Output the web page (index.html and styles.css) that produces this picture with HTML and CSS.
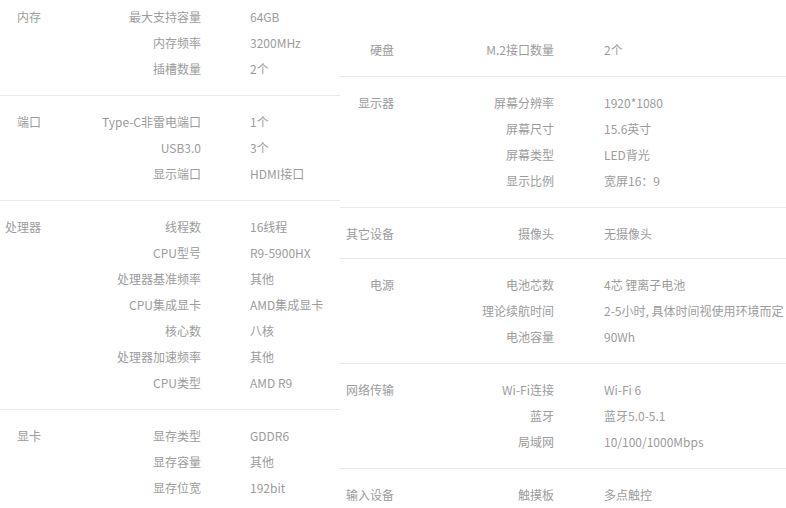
FILE: index.html
```html
<!DOCTYPE html>
<html lang="zh-CN">
<head>
<meta charset="utf-8">
<title>参数</title>
<link rel="stylesheet" href="styles.css">
</head>
<body>
<div class="sheet">
  <section class="col col-left">
    <div class="group">
      <div class="group-name">内存</div>
      <ul class="specs">
        <li class="spec"><span class="spec-key">最大支持容量</span><span class="spec-val">64GB</span></li>
        <li class="spec"><span class="spec-key">内存频率</span><span class="spec-val">3200MHz</span></li>
        <li class="spec"><span class="spec-key">插槽数量</span><span class="spec-val">2个</span></li>
      </ul>
    </div>
    <div class="group">
      <div class="group-name">端口</div>
      <ul class="specs">
        <li class="spec"><span class="spec-key">Type-C非雷电端口</span><span class="spec-val">1个</span></li>
        <li class="spec"><span class="spec-key">USB3.0</span><span class="spec-val">3个</span></li>
        <li class="spec"><span class="spec-key">显示端口</span><span class="spec-val">HDMI接口</span></li>
      </ul>
    </div>
    <div class="group">
      <div class="group-name">处理器</div>
      <ul class="specs">
        <li class="spec"><span class="spec-key">线程数</span><span class="spec-val">16线程</span></li>
        <li class="spec"><span class="spec-key">CPU型号</span><span class="spec-val">R9-5900HX</span></li>
        <li class="spec"><span class="spec-key">处理器基准频率</span><span class="spec-val">其他</span></li>
        <li class="spec"><span class="spec-key">CPU集成显卡</span><span class="spec-val">AMD集成显卡</span></li>
        <li class="spec"><span class="spec-key">核心数</span><span class="spec-val">八核</span></li>
        <li class="spec"><span class="spec-key">处理器加速频率</span><span class="spec-val">其他</span></li>
        <li class="spec"><span class="spec-key">CPU类型</span><span class="spec-val">AMD R9</span></li>
      </ul>
    </div>
    <div class="group">
      <div class="group-name">显卡</div>
      <ul class="specs">
        <li class="spec"><span class="spec-key">显存类型</span><span class="spec-val">GDDR6</span></li>
        <li class="spec"><span class="spec-key">显存容量</span><span class="spec-val">其他</span></li>
        <li class="spec"><span class="spec-key">显存位宽</span><span class="spec-val">192bit</span></li>
      </ul>
    </div>
  </section>
  <section class="col col-right">
    <div class="group">
      <div class="group-name">硬盘</div>
      <ul class="specs">
        <li class="spec"><span class="spec-key">M.2接口数量</span><span class="spec-val">2个</span></li>
      </ul>
    </div>
    <div class="group">
      <div class="group-name">显示器</div>
      <ul class="specs">
        <li class="spec"><span class="spec-key">屏幕分辨率</span><span class="spec-val">1920*1080</span></li>
        <li class="spec"><span class="spec-key">屏幕尺寸</span><span class="spec-val">15.6英寸</span></li>
        <li class="spec"><span class="spec-key">屏幕类型</span><span class="spec-val">LED背光</span></li>
        <li class="spec"><span class="spec-key">显示比例</span><span class="spec-val">宽屏16：9</span></li>
      </ul>
    </div>
    <div class="group group-short">
      <div class="group-name">其它设备</div>
      <ul class="specs">
        <li class="spec"><span class="spec-key">摄像头</span><span class="spec-val">无摄像头</span></li>
      </ul>
    </div>
    <div class="group">
      <div class="group-name">电源</div>
      <ul class="specs">
        <li class="spec"><span class="spec-key">电池芯数</span><span class="spec-val">4芯 锂离子电池</span></li>
        <li class="spec"><span class="spec-key">理论续航时间</span><span class="spec-val">2-5小时, 具体时间视使用环境而定</span></li>
        <li class="spec"><span class="spec-key">电池容量</span><span class="spec-val">90Wh</span></li>
      </ul>
    </div>
    <div class="group">
      <div class="group-name">网络传输</div>
      <ul class="specs">
        <li class="spec"><span class="spec-key">Wi-Fi连接</span><span class="spec-val">Wi-Fi 6</span></li>
        <li class="spec"><span class="spec-key">蓝牙</span><span class="spec-val">蓝牙5.0-5.1</span></li>
        <li class="spec"><span class="spec-key">局域网</span><span class="spec-val">10/100/1000Mbps</span></li>
      </ul>
    </div>
    <div class="group">
      <div class="group-name">输入设备</div>
      <ul class="specs">
        <li class="spec"><span class="spec-key">触摸板</span><span class="spec-val">多点触控</span></li>
      </ul>
    </div>
  </section>
</div>
</body>
</html>
```

FILE: styles.css
```css
html, body {
  margin: 0;
  padding: 0;
  background: #fff;
  overflow: hidden;
}

body {
  font-family: "Noto Sans CJK SC", "Noto Sans", sans-serif;
  font-size: 12px;
  line-height: 26px;
  color: #9c9c9c;
}

.sheet {
  display: flex;
  align-items: flex-start;
  width: 786px;
  height: 508px;
  overflow: hidden;
}

.col {
  flex: none;
}

.col-left {
  width: 340px;
  margin-top: -9px;
}

.col-right {
  width: 470px;
  padding-top: 24px;
}

.group {
  display: flex;
  padding: 13px 0;
  border-bottom: 1px solid #e8e8e8;
}

.group-short {
  padding-bottom: 11px;
}

.group-name {
  flex: none;
  text-align: right;
  white-space: nowrap;
}

.col-left .group-name {
  width: 41px;
}

.col-right .group-name {
  width: 54px;
}

.specs {
  list-style: none;
  margin: 0;
  padding: 0;
}

.spec {
  display: flex;
  height: 26px;
}

.spec-key {
  flex: none;
  width: 160px;
  text-align: right;
  white-space: nowrap;
}

.spec-val {
  white-space: nowrap;
}

.col-left .spec-val {
  margin-left: 49px;
}

.col-right .spec-val {
  margin-left: 50px;
}
```
